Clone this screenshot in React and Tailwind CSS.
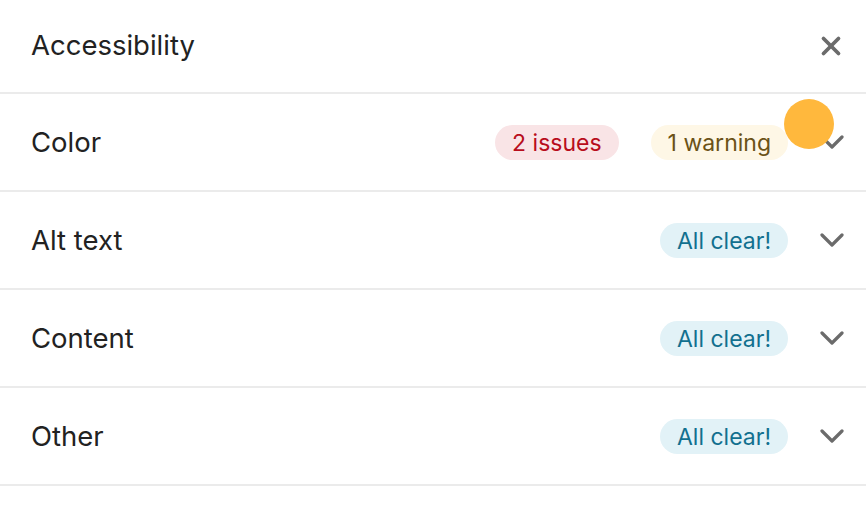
import { X } from 'lucide-react'

const rows = [
  { label: 'Color', badges: [
    { text: '2 issues', cls: 'bg-[#f9e4e6] text-[#b80d1c]' },
    { text: '1 warning', cls: 'bg-[#fef7e6] text-[#6b5217]' },
  ] },
  { label: 'Alt text', badges: [{ text: 'All clear!', cls: 'bg-[#e2f2f7] text-[#12708f]' }] },
  { label: 'Content', badges: [{ text: 'All clear!', cls: 'bg-[#e2f2f7] text-[#12708f]' }] },
  { label: 'Other', badges: [{ text: 'All clear!', cls: 'bg-[#e2f2f7] text-[#12708f]' }] },
]

function Chevron() {
  return (
    <svg width="24" height="14" viewBox="0 0 24 14" fill="none">
      <path d="M2 2l10 10L22 2" stroke="#6b6b6b" strokeWidth="3.2" strokeLinecap="round" strokeLinejoin="round" />
    </svg>
  )
}

function Row({ label, badges }) {
  return (
    <div className="h-[98px] flex items-center pl-[31px] pr-[22px] border-b-2 border-[#ebebeb]">
      <span className="text-[27.5px] text-[#222] pt-[2px]">{label}</span>
      <div className="ml-auto flex items-center gap-8">
        {badges.map((b) => (
          <span key={b.text} className={`h-[35px] px-[17px] rounded-full flex items-center text-[23px] pt-[2px] ${b.cls}`}>
            {b.text}
          </span>
        ))}
        <Chevron />
      </div>
    </div>
  )
}

export default function App() {
  return (
    <div className="relative w-[866px] h-[506px] bg-white overflow-hidden" style={{ fontFamily: 'Inter, "Noto Sans", sans-serif' }}>
      <div className="h-[94px] flex items-center pl-[31px] pr-[20px] border-b-2 border-[#ebebeb]">
        <span className="text-[27.5px] text-[#222]">Accessibility</span>
        <button className="ml-auto text-[#6b6b6b]">
          <X size={30} strokeWidth={3} />
        </button>
      </div>
      {rows.map((r) => (
        <Row key={r.label} {...r} />
      ))}
      <div className="absolute left-[784px] top-[99px] w-[50px] h-[50px] rounded-full bg-[#ffb83d]" />
    </div>
  )
}
